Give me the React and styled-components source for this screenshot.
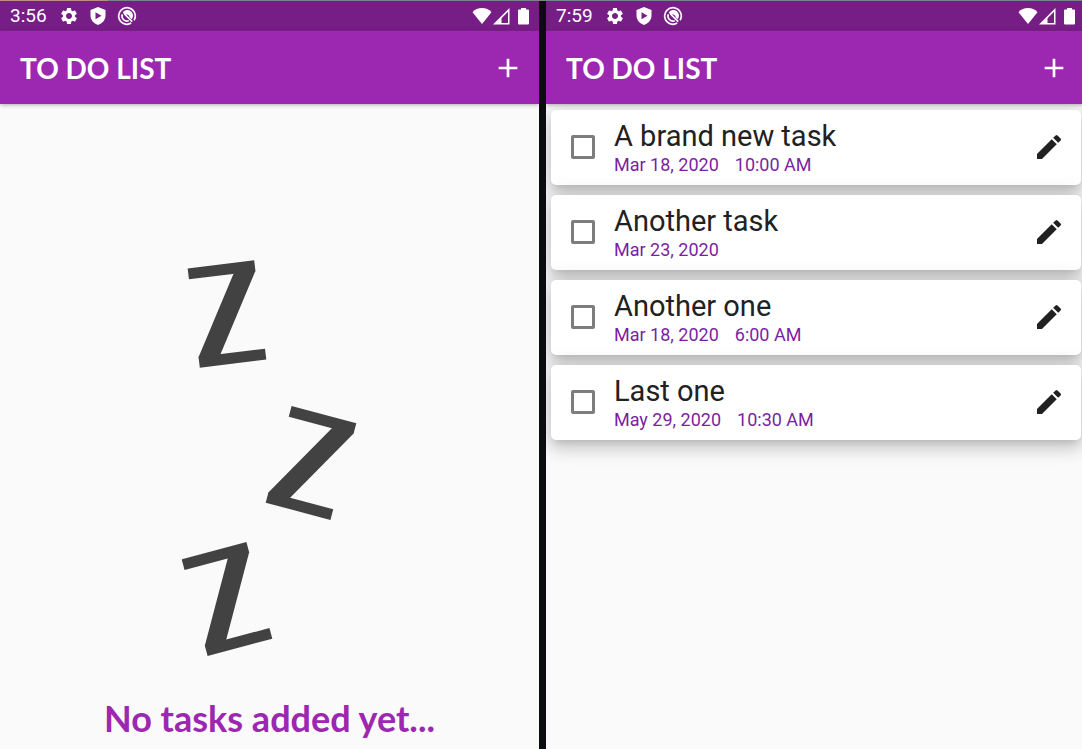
import React from 'react';
import styled, { createGlobalStyle } from 'styled-components';
import { MdSettings, MdAdd, MdEdit } from 'react-icons/md';

const purple = '#9c27b0';

const Global = createGlobalStyle`
  * { box-sizing: border-box; }
  body { margin: 0; background: #fafafa; }
  button, input { font: inherit; margin: 0; }
`;

const Viewport = styled.div`
  display: flex;
  flex-direction: column;
  min-height: 100vh;
  overflow: clip;
`;
const TopEdge = styled.div`
  height: 1px;
  background: linear-gradient(90deg, #b98c86 10%, #78838c 10%);
`;
const Board = styled.main`
  display: grid;
  grid-template-columns: 1fr 1fr;
  column-gap: 7px;
  flex: 1;
  width: calc(100% + 3px);
  background: #0b0c10;
  font-family: Roboto, sans-serif;
`;
const Screen = styled.section`
  display: flex;
  flex-direction: column;
  background: #fafafa;
  overflow: clip;
`;
const StatusBar = styled.div`
  display: flex;
  align-items: center;
  height: 30px;
  padding: 0 10px;
  background: #761e85;
  color: #fff;
  border-bottom: 1px solid #84208f;
`;
const Clock = styled.time`
  font-size: 19px;
  line-height: 20px;
  margin-right: 12px;
`;
const Notices = styled.div`
  display: flex;
  align-items: center;
  gap: 9px;
  flex: 1;
`;
const Signals = styled.div`
  display: flex;
  align-items: center;
  gap: 1px;
`;
const BatterySlot = styled.span`
  display: flex;
  margin-left: 7px;
`;
const AppBar = styled.header`
  position: relative;
  display: flex;
  align-items: center;
  justify-content: space-between;
  height: 73px;
  padding: 0 15px 0 20px;
  background: ${purple};
  color: #fff;
  box-shadow: 0 1px 4px rgba(0, 0, 0, 0.3);
`;
const Title = styled.h1`
  margin: 0;
  font: 700 28px/36px Lato, sans-serif;
`;
const IconButton = styled.button`
  display: flex;
  align-items: center;
  justify-content: center;
  width: 32px;
  height: 32px;
  padding: 0;
  border: 0;
  background: none;
  color: ${(p) => p.$color};
`;
const Empty = styled.div`
  display: flex;
  flex: 1;
  flex-direction: column;
  align-items: center;
  padding-top: 156px;
`;
const EmptyText = styled.p`
  margin: 40px 0 0;
  font: 700 36px/44px Lato, sans-serif;
  color: ${purple};
`;
const List = styled.ul`
  display: flex;
  flex-direction: column;
  gap: 10px;
  margin: 0;
  padding: 6px 4px 0 5px;
  list-style: none;
`;
const Card = styled.li`
  display: flex;
  align-items: center;
  padding: 8px 16px 10px 20px;
  border-radius: 5px;
  background: #fff;
  box-shadow: 0 5px 6px -3px rgba(0, 0, 0, 0.1), 0 8px 16px 1px rgba(0, 0, 0, 0.12),
    0 3px 22px 3px rgba(0, 0, 0, 0.12);
`;
const Check = styled.input`
  appearance: none;
  width: 24px;
  height: 24px;
  border: 3px solid #7d7d7d;
  border-radius: 2px;
  background: #fff;
`;
const TaskLabel = styled.label`
  flex: 1;
  margin-left: 19px;
`;
const TaskName = styled.span`
  display: block;
  font-size: 29px;
  line-height: 36px;
  color: #212121;
`;
const TaskDue = styled.span`
  display: flex;
  gap: 16px;
  font-size: 18px;
  line-height: 21px;
  color: #7b1fa2;
`;

function Shield() {
  return (
    <svg width="20" height="20" viewBox="0 0 20 20" aria-hidden="true">
      <path fill="#fff" fillRule="evenodd" d="M10 1 17.500 4v5.500c0 4.500-3.200 8-7.500 9.500-4.300-1.500-7.500-5-7.500-9.500V4zM7.500 6.300v7l6-3.500z" />
    </svg>
  );
}
function Radar() {
  return (
    <svg width="20" height="20" viewBox="0 0 20 20" aria-hidden="true" fill="none" stroke="#fff">
      <path strokeWidth="1.700" d="M14.200 17.100A8.300 8.300 0 1 1 17.100 14.200" />
      <path strokeWidth="1.600" d="M11.800 14.700A5 5 0 0 1 5.300 8.300" />
      <path strokeWidth="1.700" d="M7.500 8 15.200 15.700" />
      <path fill="#fff" stroke="none" d="M5.800 6.200A5.700 5.700 0 0 1 14.800 13.300L12.600 11.400C12.800 9.600 11 8 9 8.600L7.400 9z" />
    </svg>
  );
}
function Wifi() {
  return (
    <svg width="20" height="18" viewBox="0 0 20 18" aria-hidden="true">
      <path fill="#fff" d="M10 17 .5 5.200C3 2.400 6.200 1 10 1s7 1.400 9.500 4.200z" />
    </svg>
  );
}
function Cell() {
  return (
    <svg width="17" height="18" viewBox="0 0 17 18" aria-hidden="true">
      <path fill="#fff" fillRule="evenodd" d="M0 17.500 16.500 1v16.500zM15 4.700 8.500 11.200V16H15z" />
    </svg>
  );
}
function Battery() {
  return (
    <svg width="11" height="18" viewBox="0 0 11 18" aria-hidden="true">
      <path fill="#fff" d="M3 1h5v1.500h2q1 0 1 1v13q0 1-1 1H1q-1 0-1-1v-13q0-1 1-1h2z" />
    </svg>
  );
}

const marks = [
  { x: 45, y: 54, turn: -7 },
  { x: 129, y: 203, turn: 15 },
  { x: 45, y: 339, turn: -15 },
];

function SleepDrawing() {
  return (
    <svg width="176" height="396" viewBox="0 0 176 396" role="img" aria-label="Sleeping" fill="#424242">
      {marks.map((m) => (
        <g key={m.y} transform={`translate(${m.x} ${m.y}) rotate(${m.turn})`}>
          <rect x="-33.500" y="-50" width="67" height="11" />
          <rect x="-11" y="-39.500" width="22" height="79" transform="skewX(-29.700)" />
          <rect x="-10" y="-41" width="20" height="82" transform="skewX(-29.700)" />
          <rect x="-33.500" y="39" width="67" height="11" />
        </g>
      ))}
    </svg>
  );
}

function Phone({ time, children }) {
  return (
    <Screen>
      <StatusBar>
        <Clock>{time}</Clock>
        <Notices>
          <MdSettings size={20} />
          <Shield />
          <Radar />
        </Notices>
        <Signals>
          <Wifi />
          <Cell />
          <BatterySlot>
            <Battery />
          </BatterySlot>
        </Signals>
      </StatusBar>
      <AppBar>
        <Title>TO DO LIST</Title>
        <IconButton type="button" aria-label="Add task" $color="#fff">
          <MdAdd size={34} />
        </IconButton>
      </AppBar>
      {children}
    </Screen>
  );
}

const tasks = [
  { name: 'A brand new task', date: 'Mar 18, 2020', time: '10:00 AM' },
  { name: 'Another task', date: 'Mar 23, 2020' },
  { name: 'Another one', date: 'Mar 18, 2020', time: '6:00 AM' },
  { name: 'Last one', date: 'May 29, 2020', time: '10:30 AM' },
];

export default function App() {
  return (
    <Viewport>
      <Global />
      <TopEdge />
      <Board>
        <Phone time="3:56">
          <Empty>
            <SleepDrawing />
            <EmptyText>No tasks added yet...</EmptyText>
          </Empty>
        </Phone>
        <Phone time="7:59">
          <List>
            {tasks.map((t, i) => (
              <Card key={t.name}>
                <Check type="checkbox" id={`task-${i}`} />
                <TaskLabel htmlFor={`task-${i}`}>
                  <TaskName>{t.name}</TaskName>
                  <TaskDue>
                    <span>{t.date}</span>
                    {t.time && <span>{t.time}</span>}
                  </TaskDue>
                </TaskLabel>
                <IconButton type="button" aria-label={`Edit ${t.name}`} $color="#212121">
                  <MdEdit size={32} />
                </IconButton>
              </Card>
            ))}
          </List>
        </Phone>
      </Board>
    </Viewport>
  );
}
